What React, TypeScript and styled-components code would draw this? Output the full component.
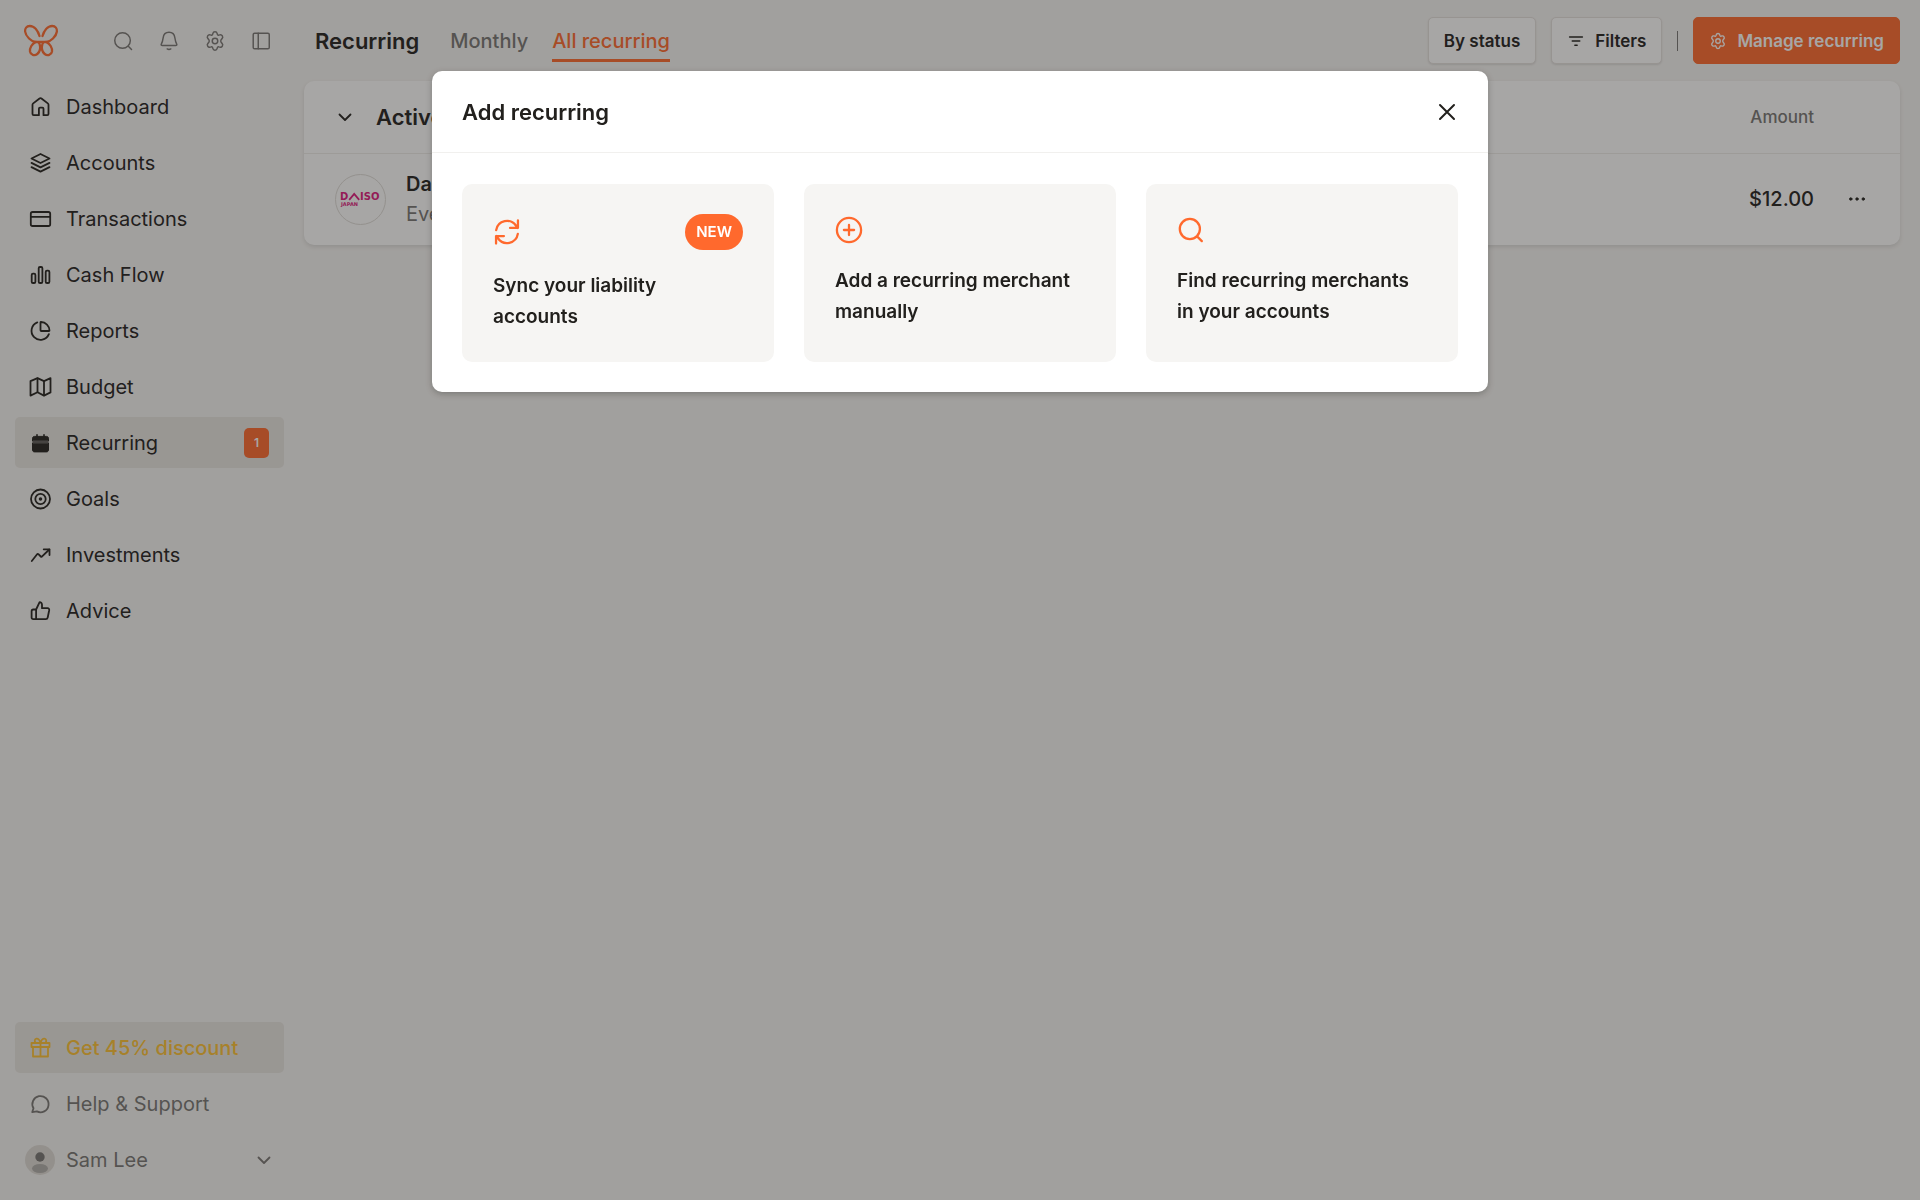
import React from "react";
import styled, { createGlobalStyle, css } from "styled-components";

const ink = "#22201d";
const muted = "#777573";
const orange = "#ff692d";
const fontStack = 'Inter, "Liberation Sans", sans-serif';

const GlobalStyle = createGlobalStyle`
  *, *::before, *::after { box-sizing: border-box; }
  html, body { margin: 0; background: #f6f5f3; }
  body {
    font-family: ${fontStack};
    font-size: 20px;
    line-height: 30px;
    color: ${ink};
    overflow: hidden;
  }
  button { font: inherit; color: inherit; background: none; border: 0; padding: 0; cursor: pointer; }
  a { color: inherit; text-decoration: none; }
  h1, h2, p, ul { margin: 0; padding: 0; }
`;

const Shell = styled.div`
  display: flex;
  min-height: 100vh;
`;

const Sidebar = styled.aside`
  display: flex;
  flex-direction: column;
  width: 299px;
  flex: none;
  padding: 0 15px 15px;
`;

const SidebarTop = styled.div`
  display: flex;
  align-items: center;
  justify-content: space-between;
  height: 81px;
  padding-left: 8px;
`;

const Tools = styled.div`
  display: flex;
  color: ${muted};
`;

const ToolButton = styled.button`
  display: grid;
  place-items: center;
  width: 46px;
  height: 46px;
`;

const NavList = styled.ul<{ $bottom?: boolean }>`
  display: flex;
  flex-direction: column;
  gap: 5px;
  list-style: none;
  ${(p) => p.$bottom && css`margin-top: auto;`}
`;

type Tone = "ink" | "muted" | "promo";
const toneColor: Record<Tone, string> = { ink, muted, promo: "#ffc233" };

const rowStyle = css<{ $tone?: Tone; $filled?: boolean }>`
  display: flex;
  align-items: center;
  gap: 14px;
  width: 100%;
  height: 51px;
  padding: 0 15px 0 13px;
  border-radius: 5px;
  text-align: left;
  color: ${(p) => toneColor[p.$tone ?? "ink"]};
  background: ${(p) => (p.$filled ? "#e8e6e2" : "transparent")};
  font-weight: ${(p) => (p.$tone === "promo" ? 500 : 400)};
`;

const NavLink = styled.a<{ $tone?: Tone; $filled?: boolean }>`${rowStyle}`;
const AccountButton = styled.button`
  ${rowStyle}
  && { color: ${muted}; padding: 0 8px 0 10px; gap: 11px; }
`;

const NavLabel = styled.span`
  flex: 1;
`;

const Count = styled.span`
  display: grid;
  place-items: center;
  width: 25px;
  height: 30px;
  border-radius: 5px;
  background: ${orange};
  color: #fff;
  font-size: 12px;
  font-weight: 600;
`;

const Main = styled.main`
  flex: 1;
  min-width: 0;
  padding: 0 20px 20px 5px;
`;

const TopBar = styled.header`
  display: flex;
  align-items: center;
  height: 81px;
  padding-left: 11px;
`;

const PageTitle = styled.h1`
  font-size: 22px;
  font-weight: 600;
  margin-right: 31px;
`;

const Tabs = styled.nav`
  display: flex;
  gap: 24px;
`;

const Tab = styled.a<{ $active?: boolean }>`
  padding: 6px 0 3px;
  font-weight: 500;
  border-bottom: 3px solid ${(p) => (p.$active ? orange : "transparent")};
  color: ${(p) => (p.$active ? orange : muted)};
`;

const Actions = styled.div`
  display: flex;
  align-items: center;
  gap: 15px;
  margin-left: auto;
`;

const Button = styled.button<{ $primary?: boolean }>`
  display: flex;
  align-items: center;
  gap: 10px;
  height: 47px;
  padding: 0 15px;
  border: 1px solid #e4e1de;
  border-radius: 5px;
  background: #fff;
  box-shadow: 0 1px 2px rgba(34, 32, 29, 0.12);
  font-size: 17px;
  font-weight: 600;
  white-space: nowrap;
  ${(p) => p.$primary && css`
    border-color: ${orange};
    background: ${orange};
    color: #fff;
    box-shadow: none;
  `}
`;

const Divider = styled.span`
  width: 1px;
  height: 20px;
  background: ${muted};
`;

const Panel = styled.section`
  border-radius: 10px;
  background: #fff;
  box-shadow: 0 2px 4px rgba(34, 32, 29, 0.12);
`;

const Table = styled.table`
  width: 100%;
  border-collapse: collapse;
`;

const HeadCell = styled.th<{ $amount?: boolean }>`
  height: 72px;
  padding: 0;
  border-bottom: 1px solid #efedea;
  text-align: ${(p) => (p.$amount ? "right" : "left")};
  font-size: ${(p) => (p.$amount ? "17px" : "22px")};
  font-weight: ${(p) => (p.$amount ? 500 : 600)};
  color: ${(p) => (p.$amount ? muted : ink)};
`;

const GroupToggle = styled.button`
  display: flex;
  align-items: center;
  gap: 19px;
  padding-left: 29px;
`;

const Cell = styled.td<{ $amount?: boolean }>`
  height: 92px;
  padding: 0;
  ${(p) => p.$amount && css`
    text-align: right;
    font-weight: 500;
  `}
`;

const ActionsHead = styled(HeadCell)`
  width: 86px;
`;

const Merchant = styled.div`
  display: flex;
  align-items: center;
  gap: 20px;
  padding-left: 31px;
`;

const MerchantLogo = styled.span`
  display: grid;
  place-items: center;
  width: 51px;
  height: 51px;
  border: 1px solid #dfdcd8;
  border-radius: 50%;
`;

const MerchantName = styled.p`
  font-weight: 600;
`;

const MerchantNote = styled.p`
  color: ${muted};
`;

const MoreButton = styled.button`
  display: grid;
  place-items: center;
  width: 40px;
  height: 40px;
  margin: 0 auto;
`;

const Overlay = styled.div`
  position: fixed;
  inset: 0;
  display: flex;
  justify-content: center;
  align-items: flex-start;
  padding: 71px 0;
  background: rgba(34, 32, 29, 0.4);
`;

const Dialog = styled.section`
  width: 55%;
  min-width: 960px;
  border-radius: 10px;
  background: #fff;
  box-shadow: 0 2px 6px rgba(34, 32, 29, 0.3);
`;

const DialogHead = styled.header`
  display: flex;
  align-items: center;
  justify-content: space-between;
  height: 82px;
  padding: 0 26px 0 30px;
  border-bottom: 1px solid #f1f0ee;
`;

const DialogTitle = styled.h2`
  font-size: 22px;
  font-weight: 600;
`;

const CloseButton = styled.button`
  display: grid;
  place-items: center;
  width: 30px;
  height: 30px;
`;

const Options = styled.div`
  display: grid;
  grid-template-columns: repeat(3, 1fr);
  gap: 30px;
  padding: 31px 30px 30px;
`;

const Option = styled.button`
  display: flex;
  flex-direction: column;
  gap: 20px;
  padding: 30px 31px;
  border-radius: 10px;
  background: #f6f5f3;
  text-align: left;
  font-size: 19px;
  line-height: 31px;
  font-weight: 600;
`;

const OptionTop = styled.span`
  display: flex;
  align-items: center;
  justify-content: space-between;
  width: 100%;
  min-height: 31px;
  color: ${orange};
`;

const NewPill = styled.span`
  padding: 3px 11px;
  border-radius: 18px;
  background: ${orange};
  color: #fff;
  font-size: 15px;
  line-height: 30px;
`;

type IconProps = { size?: number; sw?: number; box?: string; children: React.ReactNode };
const Icon = ({ size = 24, sw = 1.8, box = "0 0 24 24", children }: IconProps) => (
  <svg
    width={size}
    height={size}
    viewBox={box}
    fill="none"
    stroke="currentColor"
    strokeWidth={sw}
    strokeLinecap="round"
    strokeLinejoin="round"
    aria-hidden="true"
  >
    {children}
  </svg>
);

const gearPath =
  "M9.6 3.9c.3-1.2.9-1.9 2.4-1.9s2.100.7 2.400 1.900l.2.8c.2.700 1 1.200 1.700.9l.9-.3c1.300-.4 2.100-.1 2.800 1.100s.600 2.100-.3 3l-.6.600c-.8.800-.8 1.600-.8 2s0 1.200.8 2l.6.600c.9.900 1 1.800.3 3s-1.500 1.500-2.800 1.100l-.9-.3c-.7-.3-1.500.2-1.700.9l-.2.8c-.3 1.200-.9 1.900-2.400 1.900s-2.100-.7-2.400-1.900l-.2-.8c-.2-.7-1-1.200-1.700-.9l-.9.3c-1.300.4-2.100.1-2.800-1.100s-.6-2.100.3-3l.6-.6c.8-.8.8-1.600.8-2s0-1.200-.8-2l-.6-.6c-.9-.9-1-1.800-.3-3s1.500-1.500 2.800-1.100l.9.3c.7.300 1.500-.2 1.700-.9z";

const Gear = ({ size, sw }: { size: number; sw: number }) => (
  <Icon size={size} sw={sw}>
    <path d={gearPath} />
    <circle cx="12" cy="12" r="3" />
  </Icon>
);

const ChevronDown = () => (
  <Icon>
    <path d="M6.500 9.500l5.500 5.500 5.500-5.500" />
  </Icon>
);

const Logo = () => (
  <svg width="36" height="36" viewBox="0 0 36 36" fill="none" stroke={orange} strokeWidth="2.300" strokeLinecap="round" aria-label="Monarch">
    <path d="M16.500 13C15 8 11.500 3 6.800 3 3.500 3 1.800 5.500 2.100 8.500 2.700 13.500 8.500 18.600 12.500 18.900H23.500C27.500 18.600 33.300 13.500 33.900 8.500 34.200 5.500 32.500 3 29.200 3 24.500 3 21 8 19.500 13" />
    <path d="M13 18.900C9 20.500 6.500 25 7 28.500 7.600 32 11.500 33.200 14.300 31 17 28.800 17.600 24.500 16.600 21 16.200 19.600 15 18.900 13 18.900" />
    <path d="M23 18.900C27 20.500 29.500 25 29 28.500 28.400 32 24.500 33.200 21.700 31 19 28.800 18.400 24.500 19.400 21 19.800 19.600 21 18.900 23 18.900" />
  </svg>
);

const icons: Record<string, React.ReactNode> = {
  Dashboard: (
    <Icon>
      <path d="M4.500 9.800c0-.6.2-1 .7-1.400l6-4.700c.9-.7 1.700-.7 2.600 0l6 4.700c.5.400.7.800.7 1.400v9.200c0 .7-.5 1.200-1.200 1.200h-3.800v-6.400c0-.7-.4-1.100-1.100-1.100h-2.400c-.7 0-1.100.4-1.100 1.100v6.400H5.700c-.7 0-1.200-.5-1.200-1.200z" />
    </Icon>
  ),
  Accounts: (
    <Icon>
      <path d="M12.500 3L21.500 7.500 12.500 12 3.500 7.500z" />
      <path d="M3.500 11.900l9 4.500 9-4.500" />
      <path d="M3.500 16.100l9 4.500 9-4.500" />
    </Icon>
  ),
  Transactions: (
    <Icon>
      <rect x="2.800" y="5" width="19.400" height="14" rx="1.800" />
      <path d="M3 9.800h19" />
    </Icon>
  ),
  "Cash Flow": (
    <Icon>
      <rect x="3.700" y="10.700" width="3.700" height="9.300" rx="1.300" />
      <rect x="10.700" y="4" width="3.700" height="16" rx="1.300" />
      <rect x="17.700" y="7.700" width="3.700" height="12.300" rx="1.300" />
    </Icon>
  ),
  Reports: (
    <Icon>
      <path d="M12.500 3.400c0-.3.200-.4.500-.4a8.600 8.600 0 0 1 8.500 8.500c0 .4-.2.500-.5.500h-7.700c-.5 0-.8-.3-.8-.8z" />
      <path d="M9.300 3.400a9 9 0 1 0 11.600 11.700" />
    </Icon>
  ),
  Budget: (
    <Icon>
      <path d="M2.500 6.100v14.500l7-3.400 6.500 3.400 6.500-3.200V3.100L16 6.100 9.500 3.100z" />
      <path d="M9.500 3.300v13.700M16 6.300v14" />
    </Icon>
  ),
  Recurring: (
    <Icon sw={1}>
      <path fill="currentColor" d="M4.500 9.800V7.300c0-1.100.8-1.900 1.900-1.900h12.200c1.100 0 1.900.8 1.900 1.900v2.500z" />
      <path fill="currentColor" d="M4.500 12.200v6.800c0 1.100.8 1.900 1.900 1.900h12.200c1.100 0 1.900-.8 1.900-1.900v-6.800z" />
      <path strokeWidth="1.600" d="M9 3.700v2M16 3.700v2" />
    </Icon>
  ),
  Goals: (
    <Icon>
      <circle cx="12.500" cy="12" r="9.500" />
      <circle cx="12.500" cy="12" r="5.200" />
      <circle cx="12.500" cy="12" r="0.900" fill="currentColor" />
    </Icon>
  ),
  Investments: (
    <Icon>
      <path d="M3.800 18l5.300-6.800c.4-.5.900-.5 1.300-.1l2.400 2.400c.4.400.9.400 1.300-.1L21.300 6.500" />
      <path d="M15.700 6.300h5.800v5.800" />
    </Icon>
  ),
  Advice: (
    <Icon>
      <path d="M14 9.200V5.800c0-1.600-1-2.700-2.400-2.700L8.100 10.500v9.600h9.700c1 0 1.700-.6 1.900-1.600l1.500-7.300c.2-1.100-.5-2-1.600-2zM8.100 20.100H5.300c-1.100 0-1.700-.7-1.700-1.700v-6.200c0-1 .6-1.700 1.700-1.700h2.800" />
    </Icon>
  ),
  Gift: (
    <Icon>
      <path d="M5 11v9.500h15V11M3.500 7h18v4h-18zM12.500 7v13.500" />
      <path d="M12.500 6.800c-.8-2.500-2.100-4.300-4-4.100-1.800.2-2.500 2.700-.8 4.100M12.500 6.800c.8-2.500 2.100-4.300 4-4.100 1.800.2 2.500 2.700.8 4.100" />
    </Icon>
  ),
  Chat: (
    <Icon>
      <path d="M4.200 20.200l1.300-3.900A8.100 8.100 0 1 1 8.800 19.400z" />
    </Icon>
  ),
};

const Avatar = () => (
  <svg width="30" height="30" viewBox="0 0 30 30" aria-hidden="true">
    <clipPath id="avatar-clip"><circle cx="15" cy="15" r="15" /></clipPath>
    <g clipPath="url(#avatar-clip)">
      <rect width="30" height="30" fill="#dedbd6" />
      <circle cx="15" cy="12" r="4.700" fill="#777573" />
      <ellipse cx="15" cy="23.500" rx="8" ry="4.500" fill="#b0aeaa" />
    </g>
  </svg>
);

const DaisoLogo = () => (
  <svg width="43" height="16" viewBox="0 0 43 16" fill="#e0187d" fontFamily='"DejaVu Sans", sans-serif' fontWeight="700" aria-hidden="true">
    <text x="1" y="9" fontSize="10">D</text>
    <path d="M10.200 8.800l5-5.800 5 5.800" fill="none" stroke="#e0187d" strokeWidth="1.800" />
    <text x="21" y="9" fontSize="10">ISO</text>
    <text x="2" y="15" fontSize="5">JAPAN</text>
  </svg>
);

const mainLinks = ["Dashboard", "Accounts", "Transactions", "Cash Flow", "Reports", "Budget", "Recurring", "Goals", "Investments", "Advice"];

const options = [
  {
    text: "Sync your liability accounts",
    isNew: true,
    icon: <path d="M3.500 10.500a8.600 8.600 0 0 1 15.600-3.400l1.400 1.700M20.600 2.900v5.900h-6.200M20.500 13.500a8.600 8.600 0 0 1-15.600 3.400l-1.400-1.700M3.400 21.100v-5.900h6.200" />,
  },
  {
    text: "Add a recurring merchant manually",
    icon: <path d="M21.500 12a9.500 9.500 0 1 1-19 0 9.500 9.500 0 0 1 19 0zM12 8v8M8 12h8" />,
  },
  {
    text: "Find recurring merchants in your accounts",
    icon: <path d="M19 11.200a7.900 7.900 0 1 1-15.800 0 7.900 7.900 0 0 1 15.800 0zM16.800 17l3.700 3.700" />,
  },
];

export default function App() {
  return (
    <>
      <GlobalStyle />
      <Shell>
        <Sidebar>
          <SidebarTop>
            <Logo />
            <Tools>
              <ToolButton aria-label="Search">
                <Icon size={22} sw={1.600}><circle cx="11.500" cy="11.500" r="8.500" /><path d="M17.800 17.800l3.500 3.500" /></Icon>
              </ToolButton>
              <ToolButton aria-label="Notifications">
                <Icon size={22} sw={1.600}><path d="M4.800 17c-1.200 0-1.700-.7-1.200-1.700C5 13 5.200 11.500 5.600 8.500 6 5 8.500 2.500 12 2.500s6 2.500 6.400 6c.4 3 .6 4.500 2 6.800.5 1 0 1.700-1.200 1.700zM10 20.700c1.200.7 2.800.7 4 0" /></Icon>
              </ToolButton>
              <ToolButton aria-label="Settings"><Gear size={22} sw={1.600} /></ToolButton>
              <ToolButton aria-label="Toggle sidebar">
                <Icon size={22} sw={1.600}><rect x="3.500" y="3.500" width="17.500" height="17" rx="1.500" /><path d="M9 3.500v17" /></Icon>
              </ToolButton>
            </Tools>
          </SidebarTop>
          <nav>
            <NavList>
              {mainLinks.map((name) => (
                <li key={name}>
                  <NavLink href="#" $filled={name === "Recurring"}>
                    {icons[name]}
                    <NavLabel>{name}</NavLabel>
                    {name === "Recurring" && <Count>1</Count>}
                  </NavLink>
                </li>
              ))}
            </NavList>
          </nav>
          <NavList $bottom>
            <li><NavLink href="#" $tone="promo" $filled>{icons.Gift}<NavLabel>Get 45% discount</NavLabel></NavLink></li>
            <li><NavLink href="#" $tone="muted">{icons.Chat}<NavLabel>Help &amp; Support</NavLabel></NavLink></li>
            <li>
              <AccountButton>
                <Avatar />
                <NavLabel>Sam Lee</NavLabel>
                <ChevronDown />
              </AccountButton>
            </li>
          </NavList>
        </Sidebar>

        <Main>
          <TopBar>
            <PageTitle>Recurring</PageTitle>
            <Tabs>
              <Tab href="#">Monthly</Tab>
              <Tab href="#" $active>All recurring</Tab>
            </Tabs>
            <Actions>
              <Button>By status</Button>
              <Button>
                <Icon size={18} sw={2}><path d="M3.500 6.500h17M7 12h10M10.500 17.500h3" /></Icon>
                Filters
              </Button>
              <Divider />
              <Button $primary>
                <Gear size={18} sw={1.800} />
                Manage recurring
              </Button>
            </Actions>
          </TopBar>

          <Panel>
            <Table>
              <thead>
                <tr>
                  <HeadCell><GroupToggle><ChevronDown />Active</GroupToggle></HeadCell>
                  <HeadCell $amount>Amount</HeadCell>
                  <ActionsHead aria-label="Actions" />
                </tr>
              </thead>
              <tbody>
                <tr>
                  <Cell>
                    <Merchant>
                      <MerchantLogo><DaisoLogo /></MerchantLogo>
                      <div>
                        <MerchantName>Daiso</MerchantName>
                        <MerchantNote>Every month</MerchantNote>
                      </div>
                    </Merchant>
                  </Cell>
                  <Cell $amount>$12.00</Cell>
                  <Cell>
                    <MoreButton aria-label="More">
                      <Icon size={20} sw={1}>
                        <g fill="currentColor"><circle cx="4.500" cy="12" r="1.500" /><circle cx="12" cy="12" r="1.500" /><circle cx="19.500" cy="12" r="1.500" /></g>
                      </Icon>
                    </MoreButton>
                  </Cell>
                </tr>
              </tbody>
            </Table>
          </Panel>
        </Main>
      </Shell>

      <Overlay>
        <Dialog role="dialog" aria-modal="true" aria-labelledby="dialog-title">
          <DialogHead>
            <DialogTitle id="dialog-title">Add recurring</DialogTitle>
            <CloseButton aria-label="Close">
              <Icon sw={2}><path d="M5 5l14 14M19 5L5 19" /></Icon>
            </CloseButton>
          </DialogHead>
          <Options>
            {options.map((o) => (
              <Option key={o.text}>
                <OptionTop>
                  <Icon size={28} sw={1.800} box="1 1 22 22">{o.icon}</Icon>
                  {o.isNew && <NewPill>NEW</NewPill>}
                </OptionTop>
                <span>{o.text}</span>
              </Option>
            ))}
          </Options>
        </Dialog>
      </Overlay>
    </>
  );
}
